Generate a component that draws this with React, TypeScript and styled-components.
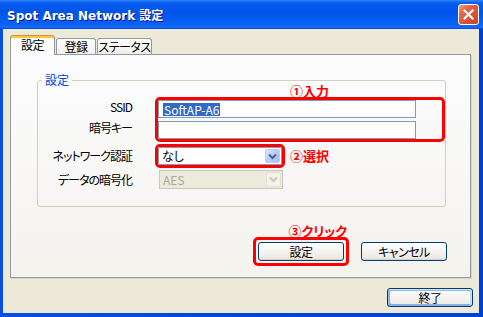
import React from 'react';
import styled, { createGlobalStyle } from 'styled-components';

const GlobalStyle = createGlobalStyle`
  * { box-sizing: border-box; }
  html, body {
    margin: 0;
    padding: 0;
    width: 483px;
    height: 317px;
    overflow: hidden;
  }
  body {
    font-family: "Noto Sans CJK JP", "Liberation Sans", sans-serif;
    font-size: 12px;
    font-feature-settings: "palt";
    color: #000;
  }
`;

const Chevron = ({ color }: { color: string }) => (
  <svg width="9" height="7" viewBox="0 0 9 7">
    <path d="M1 1.5 L4.5 5 L8 1.5" fill="none" stroke={color} strokeWidth="2" />
  </svg>
);

const App = () => (
  <>
    <GlobalStyle />
    <Window>
      <TitleBar>
        <Title>Spot Area Network 設定</Title>
        <CloseButton aria-label="閉じる">
          <svg width="11" height="11" viewBox="0 0 11 11">
            <path d="M1.5 1.5 L9.5 9.5 M9.5 1.5 L1.5 9.5" stroke="#fff" strokeWidth="2.2" strokeLinecap="square" />
          </svg>
        </CloseButton>
      </TitleBar>
      <Body>
        <Tabs>
          <Tab $active $width={45}>設定</Tab>
          <Tab $width={40}>登録</Tab>
          <Tab $width={55}>ステータス</Tab>
        </Tabs>
        <Panel>
          <GroupBox>
            <Legend>設定</Legend>
            <Form>
              <LabelStack>
                <Label>SSID</Label>
                <Label>暗号キー</Label>
              </LabelStack>
              <Highlight>
                <Note $float="left">①入力</Note>
                <Inputs>
                  <TextBox>
                    <Selected>SoftAP-A6</Selected>
                  </TextBox>
                  <TextBox />
                </Inputs>
              </Highlight>

              <Label>ネットワーク認証</Label>
              <ControlRow>
                <Highlight>
                  <Combo>
                    <ComboText>なし</ComboText>
                    <DropButton>
                      <Chevron color="#4d6185" />
                    </DropButton>
                  </Combo>
                </Highlight>
                <Note>②選択</Note>
              </ControlRow>

              <Label>データの暗号化</Label>
              <ControlRow>
                <Combo $disabled>
                  <ComboText>AES</ComboText>
                  <DropButton $disabled>
                    <Chevron color="#c9c7ba" />
                  </DropButton>
                </Combo>
              </ControlRow>
            </Form>
          </GroupBox>

          <Actions>
            <Highlight $pad={2}>
              <Note $float="right">③クリック</Note>
              <Button>設定</Button>
            </Highlight>
            <Button>キャンセル</Button>
          </Actions>
        </Panel>
        <Footer>
          <Button $default>終了</Button>
        </Footer>
      </Body>
    </Window>
  </>
);

export default App;

const Window = styled.div`
  width: 483px;
  height: 317px;
  display: flex;
  flex-direction: column;
  background: linear-gradient(90deg, #0a4fe0, #0046d8 50%, #0040d0);
`;

const TitleBar = styled.div`
  height: 29px;
  flex: none;
  display: flex;
  align-items: center;
  justify-content: space-between;
  padding: 0 4px 0 7px;
  background: linear-gradient(
    180deg,
    #2f8aff 0,
    #0a5cf0 10%,
    #0054e8 40%,
    #0a62f6 85%,
    #1a6cff 93%,
    #0048e0 100%
  );
`;

const Title = styled.div`
  font-family: "DejaVu Sans", "Noto Sans CJK JP", sans-serif;
  font-feature-settings: normal;
  font-size: 12px;
  font-weight: 700;
  color: #fff;
  text-shadow: 1px 1px #0f1089;
  white-space: nowrap;
`;

const CloseButton = styled.button`
  width: 21px;
  height: 21px;
  padding: 0;
  display: flex;
  align-items: center;
  justify-content: center;
  border: 1px solid #fff;
  border-radius: 3px;
  background: linear-gradient(135deg, #f2a58c 0%, #e4664a 28%, #d6502f 70%, #c94424 100%);
`;

const Body = styled.div`
  flex: 1;
  margin: 0 4px 4px 3px;
  padding: 6px 6px 6px 7px;
  display: flex;
  flex-direction: column;
  background: #ece9d8;
`;

const Tabs = styled.div`
  height: 19px;
  display: flex;
  align-items: flex-end;
  gap: 1px;
`;

const Tab = styled.div<{ $active?: boolean; $width: number }>`
  position: relative;
  z-index: ${(p) => (p.$active ? 1 : 0)};
  width: ${(p) => p.$width}px;
  height: ${(p) => (p.$active ? 20 : 16)}px;
  margin-bottom: ${(p) => (p.$active ? -1 : 0)}px;
  padding-bottom: ${(p) => (p.$active ? 2 : 0)}px;
  display: flex;
  align-items: center;
  justify-content: center;
  line-height: 14px;
  letter-spacing: -0.5px;
  white-space: nowrap;
  border: 1px solid #919b9c;
  border-bottom: none;
  border-radius: 3px 3px 0 0;
  border-top-color: ${(p) => (p.$active ? '#e68b2c' : '#919b9c')};
  background: ${(p) =>
    p.$active ? '#fcfcfe' : 'linear-gradient(180deg, #fff, #fafaf9 26%, #f0f0ea 95%, #ecebe5)'};
  box-shadow: ${(p) => (p.$active ? 'inset 0 2px 0 #ffc73c' : 'none')};
`;

const Panel = styled.div`
  height: 224px;
  margin-right: 2px;
  display: flex;
  flex-direction: column;
  border: 1px solid #919b9c;
  background: linear-gradient(180deg, #fcfcfe, #f4f3ee);
  box-shadow: 1px 1px 0 rgba(0, 0, 0, 0.08);
`;

const GroupBox = styled.fieldset`
  margin: 18px 24px 0 26px;
  padding: 10px 0 17px;
  min-inline-size: auto;
  border: 1px solid #d0d0bf;
  border-radius: 3px;
`;

const Legend = styled.legend`
  margin-left: 4px;
  padding: 0 3px;
  font-size: 12px;
  line-height: 14px;
  color: #0046d5;
`;

const Form = styled.div`
  display: grid;
  grid-template-columns: 94px auto;
  column-gap: 23px;
  row-gap: 2px;
  align-items: center;
`;

const LabelStack = styled.div`
  align-self: start;
  display: flex;
  flex-direction: column;
  gap: 3px;
  padding-top: 1px;
`;

const Label = styled.div`
  height: 18px;
  line-height: 18px;
  letter-spacing: -1px;
  text-align: right;
  white-space: nowrap;
`;

const ControlRow = styled.div`
  display: flex;
  align-items: center;
  gap: 5px;
`;

const Highlight = styled.div<{ $pad?: number }>`
  position: relative;
  display: inline-flex;
  align-self: flex-start;
  padding: ${(p) => p.$pad ?? 0}px;
  border: 3px solid #ff0000;
  border-radius: 5px;
`;

const Note = styled.span<{ $float?: 'left' | 'right' }>`
  position: ${(p) => (p.$float ? 'absolute' : 'static')};
  bottom: calc(100% + 2px);
  left: ${(p) => (p.$float === 'left' ? '132px' : 'auto')};
  right: ${(p) => (p.$float === 'right' ? '-1px' : 'auto')};
  font-size: 13px;
  font-weight: 700;
  line-height: 14px;
  color: #ff0000;
  white-space: nowrap;
`;

const Inputs = styled.div`
  display: flex;
  flex-direction: column;
  gap: 3px;
`;

const TextBox = styled.div`
  width: 258px;
  height: 18px;
  padding-left: 4px;
  display: flex;
  align-items: center;
  border: 1px solid #7f9db9;
  background: #fff;
`;

const Selected = styled.span`
  padding: 0 1px;
  line-height: 13px;
  color: #fff;
  background: #316ac5;
`;

const Combo = styled.div<{ $disabled?: boolean }>`
  width: 124px;
  height: ${(p) => (p.$disabled ? 19 : 18)}px;
  margin-left: ${(p) => (p.$disabled ? 4 : 0)}px;
  padding: 1px 1px 1px 3px;
  display: flex;
  align-items: center;
  border: 1px solid ${(p) => (p.$disabled ? '#c9c7ba' : '#7f9db9')};
  background: ${(p) => (p.$disabled ? '#ebeadb' : '#fff')};
  color: ${(p) => (p.$disabled ? '#aca899' : '#000')};
`;

const ComboText = styled.span`
  flex: 1;
  line-height: 14px;
`;

const DropButton = styled.span<{ $disabled?: boolean }>`
  width: 15px;
  height: 100%;
  display: flex;
  align-items: center;
  justify-content: center;
  border-radius: 2px;
  border: 1px solid ${(p) => (p.$disabled ? '#e2e0d4' : '#b9cdf6')};
  background: ${(p) =>
    p.$disabled ? '#f2f1ea' : 'linear-gradient(135deg, #dce7fd, #b7cbf8 50%, #a6bff5)'};
`;

const Actions = styled.div`
  margin-top: 30px;
  padding-right: 23px;
  display: flex;
  justify-content: flex-end;
  align-items: center;
  gap: 12px;
`;

const Button = styled.button<{ $default?: boolean }>`
  width: 86px;
  height: 19px;
  padding: 0;
  font-family: inherit;
  font-feature-settings: inherit;
  font-size: 12px;
  line-height: 16px;
  letter-spacing: -0.5px;
  color: #000;
  border: 1px solid #003c74;
  border-radius: 3px;
  background: linear-gradient(180deg, #fff, #ecebe6 86%, #d6d0c5);
  box-shadow: ${(p) =>
    p.$default
      ? 'inset -1px 1px #cee7ff, inset 1px 2px #98b8ea, inset -2px 2px #bcd4f6, inset 1px -1px #89ade4, inset 2px -2px #89ade4'
      : 'none'};
`;

const Footer = styled.div`
  margin-top: 10px;
  display: flex;
  justify-content: flex-end;
`;
